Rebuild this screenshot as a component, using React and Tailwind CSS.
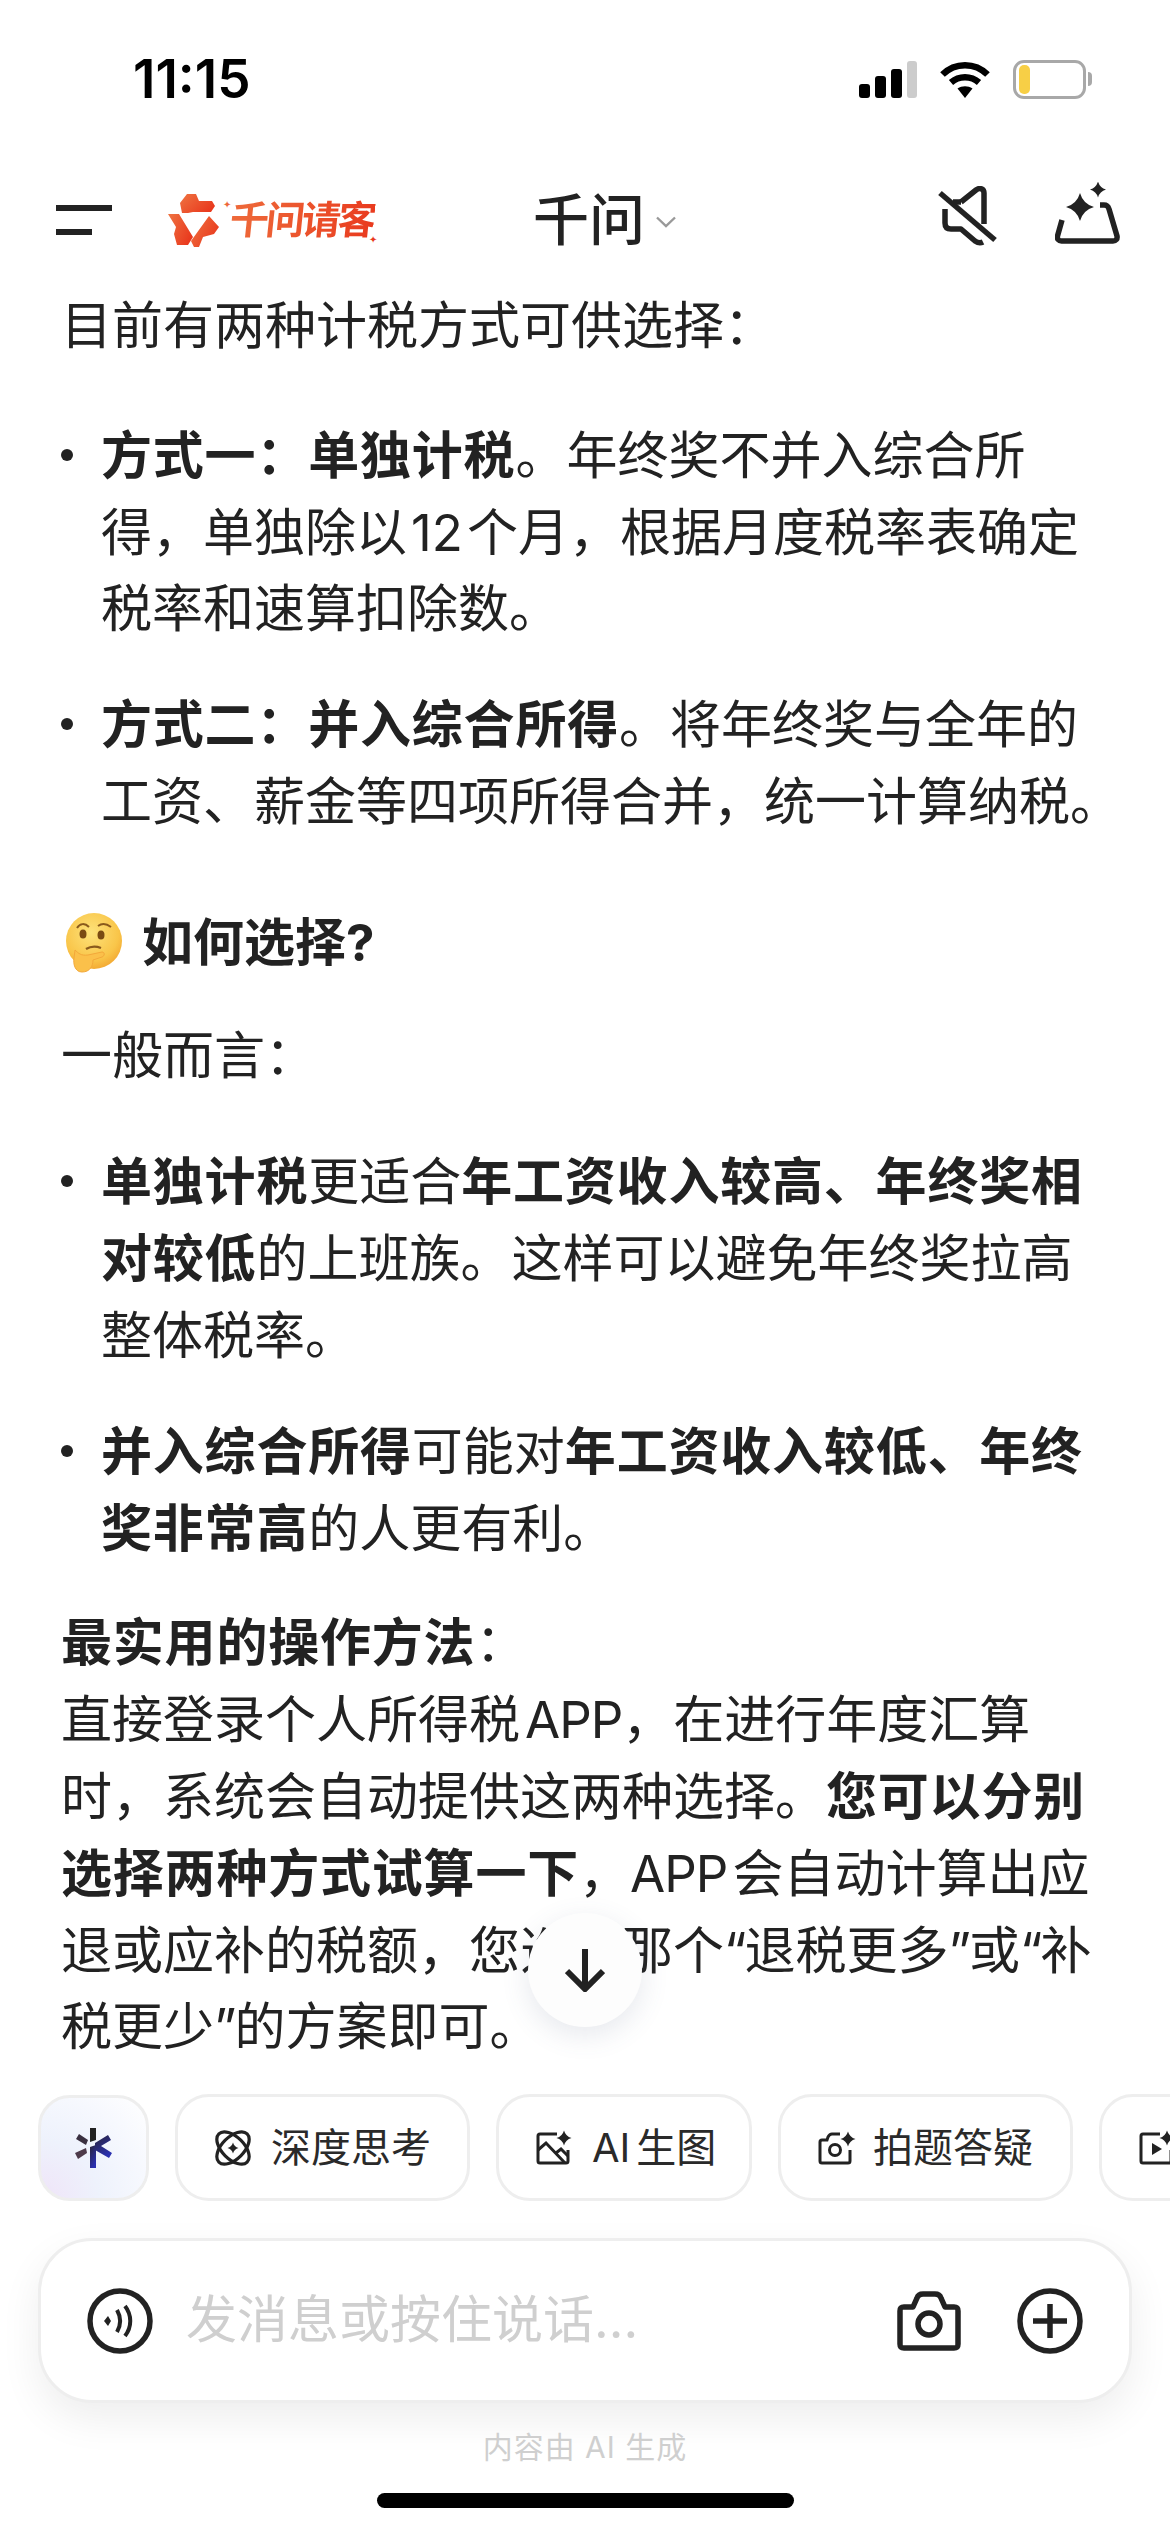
const ff = { fontFamily: '"Inter", "Noto Sans CJK SC", sans-serif' };

function B({ children }) {
  return <strong className="font-bold tracking-[0.8px]">{children}</strong>;
}

// latin quotes run a little tighter in the reference
function Q({ children }) {
  return <span className="tracking-[-2px]">{children}</span>;
}

function Bullet({ children, className = '' }) {
  return (
    <div className={`relative pl-[101px] pr-[60px] ${className}`}>
      <span className="absolute left-[61px] top-[31px] w-[12px] h-[12px] rounded-full bg-[#222]" />
      {children}
    </div>
  );
}

function Signal() {
  return (
    <svg width="58" height="37" viewBox="0 0 58 37">
      <rect x="0" y="23" width="11" height="14" rx="3" fill="#000" />
      <rect x="16" y="15" width="11" height="22" rx="3" fill="#000" />
      <rect x="32" y="8" width="11" height="29" rx="3" fill="#000" />
      <rect x="48" y="0" width="10" height="37" rx="3" fill="#ccc" />
    </svg>
  );
}

function Wifi() {
  return (
    <svg width="50" height="37" viewBox="0 0 50 37" fill="none" stroke="#000" strokeWidth="6.5">
      <path d="M2.5 13.5 C15 1 35 1 47.5 13.5" />
      <path d="M11 21.5 C19 14.5 31 14.5 39 21.5" />
      <path d="M25 37 L17.5 27.5 C22 24.5 28 24.5 32.5 27.5 Z" fill="#000" stroke="none" />
    </svg>
  );
}

function Battery() {
  return (
    <div className="flex items-center">
      <div className="w-[73px] h-[39px] rounded-[11px] border-[3px] border-[#a8a8a8] p-[2px]">
        <div className="ml-[1px] w-[11px] h-full rounded-[5px] bg-[#f7cf46]" />
      </div>
      <div className="w-[4px] h-[14px] ml-[2px] rounded-r-full bg-[#a8a8a8]" />
    </div>
  );
}

function LogoMark() {
  return (
    <svg width="52" height="53" viewBox="0 0 52 53">
      <defs>
        <linearGradient id="lg" x1="0" y1="0" x2="1" y2="0.6">
          <stop offset="0" stopColor="#ef7442" />
          <stop offset="1" stopColor="#e93a1e" />
        </linearGradient>
      </defs>
      <path d="M12 9 L19 0 H28 L31 7 H44 L47 12 L43 18 H25 L20 19 H14 Z" fill="url(#lg)" />
      <path d="M0 20 H11 L25 43 L20 51 H9 L6 40 L8 33 Z" fill="url(#lg)" />
      <path d="M41 22 L51 33 L46 40 L35 43 L31 53 H26 L23 47 Z" fill="url(#lg)" />
    </svg>
  );
}

function Sparkle({ cx, cy, r, fill = '#222' }) {
  const k = r * 0.22;
  return (
    <path
      d={`M${cx} ${cy - r} Q${cx + k} ${cy - k} ${cx + r} ${cy} Q${cx + k} ${cy + k} ${cx} ${cy + r} Q${cx - k} ${cy + k} ${cx - r} ${cy} Q${cx - k} ${cy - k} ${cx} ${cy - r}Z`}
      fill={fill}
      stroke="none"
    />
  );
}

function MuteIcon() {
  return (
    <svg className="-mt-[8px]" width="60" height="60" viewBox="0 0 60 60" fill="none" stroke="#222" strokeWidth="5.5">
      <path d="M2 7 L57 54" />
      <path d="M23 16 L38 4 C42 1 46 3 46 7 V38" strokeLinejoin="round" />
      <path d="M15 16 H23" />
      <path d="M7 23 V37 C7 41 9 43 13 43 H23 L37 55 C40 57 43 57 45 56" strokeLinejoin="round" />
    </svg>
  );
}

function SparkBox() {
  return (
    <svg className="-mt-[14px]" width="66" height="62" viewBox="0 0 66 62" fill="none" stroke="#222" strokeWidth="5.5">
      <path d="M7 38 L2.5 54 C2 57 3.5 59 6.5 59 H58 C61 59 62.5 57 62 54 L54 27 C53 24 52 23 49 23 H45" strokeLinejoin="round" />
      <Sparkle cx={25} cy={25} r={14} />
      <Sparkle cx={43} cy={7.5} r={8} />
    </svg>
  );
}

function ThinkEmoji() {
  return (
    <svg width="58" height="60" viewBox="0 0 58 60">
      <defs>
        <radialGradient id="fc" cx="0.45" cy="0.35" r="0.7">
          <stop offset="0" stopColor="#fde27a" />
          <stop offset="0.7" stopColor="#f9c549" />
          <stop offset="1" stopColor="#f2a32e" />
        </radialGradient>
      </defs>
      <circle cx="30" cy="28" r="28" fill="url(#fc)" />
      <path d="M13 15 C16 10 21 10 25 14" fill="none" stroke="#8a5a1c" strokeWidth="2" />
      <path d="M34 13 C38 10 43 11 47 14" fill="none" stroke="#8a5a1c" strokeWidth="2" />
      <ellipse cx="19" cy="21" rx="3.5" ry="4.5" fill="#7a4a12" />
      <ellipse cx="37" cy="22" rx="3.5" ry="4.5" fill="#7a4a12" />
      <path d="M22 36 C27 33 32 33 37 35" fill="none" stroke="#8a5a1c" strokeWidth="2.4" />
      <path d="M11 37 C14 40 17 43 24 42 L38 39 C41 39 41 43 38 44 L29 47 C29 53 26 59 18 59 C11 59 9 51 10 45 Z" fill="#fbc04a" stroke="#f3a83a" strokeWidth="1" />
    </svg>
  );
}

function AtomIcon() {
  return (
    <svg width="36" height="36" viewBox="0 0 36 36" fill="none" stroke="#222" strokeWidth="3.2">
      <ellipse cx="18" cy="18" rx="20" ry="11" transform="rotate(45 18 18)" />
      <ellipse cx="18" cy="18" rx="20" ry="11" transform="rotate(-45 18 18)" />
      <Sparkle cx={18} cy={18} r={5.5} />
    </svg>
  );
}

function ImageSpark() {
  return (
    <svg width="36" height="36" viewBox="0 0 36 36" fill="none" stroke="#222" strokeWidth="3">
      <path d="M21 4 H4 C2.5 4 2 4.5 2 6 V31 C2 32.5 2.5 33 4 33 H30 C31.5 33 32 32.5 32 31 V20" />
      <path d="M2 20 L10 13 L29 33" />
      <path d="M20 23 L25 19 L32 26" />
      <Sparkle cx={28} cy={8} r={7.5} />
    </svg>
  );
}

function CamSpark() {
  return (
    <svg width="38" height="36" viewBox="0 0 38 36" fill="none" stroke="#222" strokeWidth="3">
      <path d="M22 4 H14 C12 4 11 5 10 7 L9 10 H4 C2.5 10 2 10.5 2 12 V31 C2 32.5 2.5 33 4 33 H30 C31.5 33 32 32.5 32 31 V20" />
      <circle cx="17" cy="20" r="5.5" />
      <Sparkle cx={30} cy={9} r={7.5} />
    </svg>
  );
}

function VideoSpark() {
  return (
    <svg width="36" height="36" viewBox="0 0 36 36" fill="none" stroke="#222" strokeWidth="3">
      <path d="M21 4 H4 C2.5 4 2 4.5 2 6 V31 C2 32.5 2.5 33 4 33 H30 C31.5 33 32 32.5 32 31 V20" />
      <path d="M13 13 L23 19 L13 25 Z" fill="#222" stroke="none" />
      <Sparkle cx={28} cy={8} r={7.5} />
    </svg>
  );
}

function Chip({ icon, label, className = '' }) {
  return (
    <div className={`shrink-0 h-[107px] pl-[37px] rounded-[34px] border-[3px] border-[#eeeeee] bg-white flex items-center gap-[20px] text-[40px] text-[#2a2a2a] ${className}`}>
      {icon}
      <span>{label}</span>
    </div>
  );
}

export default function App() {
  return (
    <div className="relative w-[1170px] h-[2532px] overflow-hidden bg-white flex flex-col text-[#222]" style={ff}>
      {/* status bar */}
      <div className="h-[160px] shrink-0 pl-[133px] pr-[78px] pt-[50px]">
        <div className="h-[58px] flex items-center justify-between">
          <span className="text-[53px] leading-[58px] font-semibold text-black">11:15</span>
          <div className="flex items-center gap-[23px]">
            <Signal />
            <Wifi />
            <Battery />
          </div>
        </div>
      </div>

      {/* header */}
      <div className="relative h-[120px] shrink-0 flex items-center justify-between pl-[56px] pr-[49px]">
        <div className="flex items-center">
          <div className="flex flex-col gap-[18px] w-[56px]">
            <div className="w-[56px] h-[6px] bg-[#222]" />
            <div className="w-[36px] h-[6px] bg-[#222]" />
          </div>
          <div className="relative ml-[56px] flex items-center">
            <LogoMark />
            <span className="ml-[10px] inline-block -skew-x-6 text-[39px] leading-[46px] font-bold text-transparent bg-clip-text bg-gradient-to-r from-[#ee6a3a] to-[#e93a1e] tracking-[-3px]">千问请客</span>
            <span className="absolute left-[55px] top-[5px] text-[10px] leading-[10px] text-[#ee6a3a]">✦</span>
            <span className="absolute left-[201px] top-[40px] text-[10px] leading-[10px] text-[#e93a1e]">✦</span>
          </div>
        </div>
        <div className="absolute left-[533px] top-[28px] flex items-center">
          <span className="text-[56px] leading-[64px] font-medium">千问</span>
          <svg className="ml-[10px] mt-[4px]" width="22" height="12" viewBox="0 0 22 12" fill="none" stroke="#999" strokeWidth="2.4">
            <path d="M2 1.5 L11 10 L20 1.5" />
          </svg>
        </div>
        <div className="flex items-center gap-[57px]">
          <MuteIcon />
          <SparkBox />
        </div>
      </div>

      {/* answer */}
      <div className="flex-1 min-h-0 overflow-hidden text-[51px] leading-[76.8px] text-[#222]">
        <p className="pl-[61px] mt-[8px]">目前有两种计税方式可供选择：</p>
        <Bullet className="mt-[53px]"><B>方式一：单独计税</B>。年终奖不并入综合所得，单独除以<span className="mx-[4px]">12</span>个月，根据月度税率表确定税率和速算扣除数。</Bullet>
        <Bullet className="mt-[39px]"><B>方式二：并入综合所得</B>。将年终奖与全年的<br /><span className="whitespace-nowrap">工资、薪金等四项所得合并，统一计算纳税。</span></Bullet>
        <div className="pl-[64px] mt-[64px] flex items-center gap-[20px] font-bold"><ThinkEmoji />如何选择?</div>
        <p className="pl-[61px] mt-[36px]">一般而言：</p>
        <Bullet className="mt-[50px]"><B>单独计税</B>更适合<B>年工资收入较高、年终奖相对较低</B>的上班族。这样可以避免年终奖拉高整体税率。</Bullet>
        <Bullet className="mt-[39px]"><B>并入综合所得</B>可能对<B>年工资收入较低、年终奖非常高</B>的人更有利。</Bullet>
        <p className="pl-[61px] pr-[60px] mt-[38px]"><B>最实用的操作方法</B>：<br />直接登录个人所得税<span className="ml-[5px] tracking-[-1px]">APP</span>，在进行年度汇算时，系统会自动提供这两种选择。<B>您可以分别选择两种方式试算一下</B>，<span className="mr-[5px] tracking-[-1px]">APP</span>会自动计算出应退或应补的税额，您选择那个<Q>“</Q>退税更多<Q>”</Q>或<Q>“</Q>补税更少<Q>”</Q>的方案即可。</p>
      </div>

      {/* scroll down button */}
      <div className="absolute left-[528px] top-[1913px] w-[114px] h-[114px] rounded-full bg-[#fdfdfd] shadow-[0_8px_28px_rgba(80,90,130,0.14)] flex items-center justify-center">
        <svg width="40" height="44" viewBox="0 0 40 44" fill="none" stroke="#222" strokeWidth="6">
          <path d="M20 1 V40" />
          <path d="M2 23 L20 41 L38 23" />
        </svg>
      </div>

      {/* chips */}
      <div className="shrink-0 flex items-center gap-[26px] pl-[38px] h-[107px]">
        <div className="shrink-0 w-[111px] h-[106px] rounded-[32px] border-[3px] border-[#eeeeee] bg-[radial-gradient(circle_at_0%_100%,#efe4f8_0%,#eef2fc_40%,#f6f8fe_70%,#ffffff_100%)] flex items-center justify-center">
          <svg width="37" height="40" viewBox="0 0 37 40">
            <defs>
              <linearGradient id="st" x1="0" y1="0" x2="0.5" y2="1">
                <stop offset="0" stopColor="#2a2438" />
                <stop offset="1" stopColor="#2a30b0" />
              </linearGradient>
            </defs>
            <path d="M15 0 H21 V12 L15 14 Z" fill="#222" />
            <path d="M15 19 L21 17 V40 H15 Z" fill="url(#st)" />
            <path d="M20 15 L33 7 L36 12 L26 18 L37 25 L34 30 L20 22 Z" fill="url(#st)" />
            <path d="M1 11 L4 6 L13 12 L11 17 Z" fill="#3a3040" />
            <path d="M0 25 L11 20 L12 25 L3 31 Z" fill="#4d3a4a" />
          </svg>
        </div>
        <Chip className="w-[295px]" icon={<AtomIcon />} label="深度思考" />
        <Chip className="w-[256px]" icon={<ImageSpark />} label={<><span className="mr-[6px]">AI</span>生图</>} />
        <Chip className="w-[295px] !gap-[17px]" icon={<CamSpark />} label="拍题答疑" />
        <Chip className="w-[295px]" icon={<VideoSpark />} label="" />
      </div>

      {/* input */}
      <div className="shrink-0 mt-[37px] ml-[38px] mr-[38px] h-[165px] rounded-[54px] border-[3px] border-[#eeeeee] bg-white shadow-[0_16px_40px_rgba(0,0,0,0.07)] flex items-center pl-[46px] pr-[46px]">
        <svg width="66" height="66" viewBox="0 0 66 66" fill="none" stroke="#222">
          <circle cx="33" cy="33" r="30" strokeWidth="5.5" />
          <path d="M21 28 L17 33 L21 38 L24 33 Z" fill="#222" stroke="none" />
          <path d="M30 22 C34 29 34 37 30 44" strokeWidth="4" />
          <path d="M38 18 C45 27 45 39 38 48" strokeWidth="4" />
        </svg>
        <span className="ml-[33px] flex-1 text-[51px] text-[#cfcfcf]">发消息或按住说话...</span>
        <svg width="64" height="60" viewBox="0 0 64 60" fill="none" stroke="#222" strokeWidth="5.5" strokeLinejoin="round">
          <path d="M3 20 C3 17 4 16 7 16 H16 L20 7 C21 4 23 3 26 3 H38 C41 3 43 4 44 7 L48 16 H57 C60 16 61 17 61 20 V53 C61 56 60 57 57 57 H7 C4 57 3 56 3 53 Z" />
          <circle cx="32" cy="33" r="11" />
        </svg>
        <svg className="ml-[56px]" width="66" height="66" viewBox="0 0 66 66" fill="none" stroke="#222">
          <circle cx="33" cy="33" r="30" strokeWidth="5.5" />
          <path d="M33 16 V50 M16 33 H50" strokeWidth="5.5" />
        </svg>
      </div>

      {/* footer */}
      <div className="shrink-0 mt-[24px] text-center text-[30px] leading-[40px] text-[#cfcfcf] tracking-[1px]">内容由 AI 生成</div>
      <div className="shrink-0 mt-[26px] mb-[24px] mx-auto w-[417px] h-[15px] rounded-full bg-black" />
    </div>
  );
}
